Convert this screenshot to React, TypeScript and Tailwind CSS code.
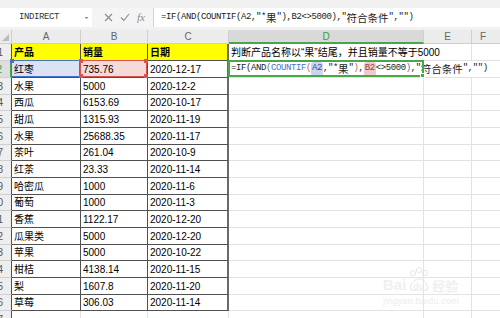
import React from "react";

const M = "font-['Liberation_Mono'] text-[9px] tracking-[-0.4px]";
const C = "font-['Noto_Sans_CJK_SC'] text-[10.5px]";

const data: [string, string, string][] = [
  ["红枣", "735.76", "2020-12-17"],
  ["水果", "5000", "2020-12-2"],
  ["西瓜", "6153.69", "2020-10-17"],
  ["甜瓜", "1315.93", "2020-11-19"],
  ["水果", "25688.35", "2020-11-17"],
  ["茶叶", "261.04", "2020-10-9"],
  ["红茶", "23.33", "2020-11-14"],
  ["哈密瓜", "1000", "2020-11-6"],
  ["葡萄", "1000", "2020-11-3"],
  ["香蕉", "1122.17", "2020-12-20"],
  ["瓜果类", "5000", "2020-12-20"],
  ["苹果", "5000", "2020-10-22"],
  ["柑桔", "4138.14", "2020-11-15"],
  ["梨", "1607.8", "2020-11-20"],
  ["草莓", "306.03", "2020-11-14"],
];

const heights = ["h-[17px]", "h-[17px]", "h-[16px]"];

const cellText = "text-[10px] text-black font-['Liberation_Sans','Noto_Sans_CJK_SC',sans-serif]";
const dark = "border-b border-r border-[#505050]";
const light = "border-b border-r border-[#e2e2e2]";

function RowHead({ n, sel }: { n: number; sel?: boolean }) {
  return (
    <div
      className={
        sel
          ? "w-[12px] shrink-0 flex items-center justify-end pr-[8px] overflow-hidden bg-[#dedede] border-b border-b-[#cfcfcf] border-r-2 border-r-[#4ba54b] text-[10px] text-[#3f9a3f] font-['Liberation_Sans']"
          : "w-[12px] shrink-0 flex items-center justify-end pr-[8px] overflow-hidden bg-[#eeeeee] border-b border-b-[#cfcfcf] border-r border-r-[#505050] text-[10px] text-[#555] font-['Liberation_Sans']"
      }
    >
      <span className="shrink-0">{n}</span>
    </div>
  );
}

function Corner({ pos, color }: { pos: string; color: string }) {
  return <div className={`absolute w-[4px] h-[4px] ${pos} ${color}`} />;
}

export default function App() {
  return (
    <div className="w-[500px] h-[318px] overflow-hidden bg-white relative select-none">
      {/* top strip */}
      <div className="h-[8px] bg-[#f1f1f1]" />
      {/* formula bar */}
      <div className="h-[19px] flex bg-[#f4f4f4]">
        <div className="w-[92px] bg-white flex items-center pl-[19px] pr-[3px]">
          <span className={`${M} text-[#333]`}>INDIRECT</span>
          <svg className="ml-auto" width="5" height="4" viewBox="0 0 5 4">
            <path d="M0.5 1 L2.5 3 L4.5 1 Z" fill="#888" />
          </svg>
        </div>
        <div className="w-[61px] flex items-center pl-[12px] gap-[7px]">
          <svg width="9" height="9" viewBox="0 0 9 9">
            <path d="M1 1 L8 8 M8 1 L1 8" stroke="#8a8a8a" strokeWidth="1.1" fill="none" />
          </svg>
          <svg width="10" height="9" viewBox="0 0 10 9">
            <path d="M1 4.5 L3.8 7.5 L9 1" stroke="#8a8a8a" strokeWidth="1.1" fill="none" />
          </svg>
          <span className="font-['Liberation_Serif'] italic text-[11px] text-[#8a8a8a] leading-none">fx</span>
        </div>
        <div className="flex-1 bg-white border-l border-[#d4d4d4] flex items-center pl-[7px] text-[#222] whitespace-nowrap">
          <span className={M}>{'=IF(AND(COUNTIF(A2,"*'}</span>
          <span className={C}>果</span>
          <span className={M}>{'"),B2<>5000),"'}</span>
          <span className={C}>符合条件</span>
          <span className={M}>{'","")'}</span>
        </div>
      </div>
      <div className="h-[3px] bg-[#f1f1f1]" />
      {/* column headers */}
      <div className="h-[14px] flex text-[10px] font-['Liberation_Sans'] text-[#666]">
        <div className="w-[12px] shrink-0 bg-[#ececec] border-b border-r border-[#cfcfcf] flex items-end justify-end pr-[2px] pb-[2px]">
          <svg width="7" height="7" viewBox="0 0 7 7">
            <path d="M7 0 L7 7 L0 7 Z" fill="#bdbdbd" />
          </svg>
        </div>
        <div className="w-[69px] shrink-0 bg-[#ececec] border-b border-r border-[#cfcfcf] flex items-center justify-center">A</div>
        <div className="w-[67px] shrink-0 bg-[#ececec] border-b border-r border-[#cfcfcf] flex items-center justify-center">B</div>
        <div className="w-[81px] shrink-0 bg-[#ececec] border-b border-r border-[#cfcfcf] flex items-center justify-center">C</div>
        <div className="w-[195px] shrink-0 bg-[#d9d9d9] border-b-2 border-b-[#4ba54b] border-r border-r-[#cfcfcf] flex items-center justify-center text-[#3f9a3f]">D</div>
        <div className="w-[48px] shrink-0 bg-[#ececec] border-b border-r border-[#cfcfcf] flex items-center justify-center">E</div>
        <div className="w-[40px] shrink-0 bg-[#ececec] border-b border-[#cfcfcf] flex items-center pl-[8px]">F</div>
      </div>
      {/* row 1 */}
      <div className={`h-[17px] flex ${cellText}`}>
        <RowHead n={1} />
        <div className={`w-[69px] shrink-0 bg-[#ffff00] ${dark} flex items-center pl-[2px] font-bold`}>产品</div>
        <div className={`w-[67px] shrink-0 bg-[#ffff00] ${dark} flex items-center pl-[2px] font-bold`}>销量</div>
        <div className={`w-[81px] shrink-0 bg-[#ffff00] border-b border-b-[#505050] border-r-2 border-r-[#6a6a6a] flex items-center pl-[2px] font-bold`}>日期</div>
        <div className="w-[195px] shrink-0 border-b border-b-[#e2e2e2] flex items-center pl-[2px] whitespace-nowrap overflow-visible">
          判断产品名称以“果”结尾，并且销量不等于5000
        </div>
        <div className={`w-[48px] shrink-0 ${light}`} />
        <div className="w-[40px] shrink-0 border-b border-[#e2e2e2]" />
      </div>
      {/* data rows */}
      {data.map((r, i) => {
        const h = heights[i % 3];
        const isFirst = i === 0;
        return (
          <div key={i} className={`${h} flex ${cellText}`}>
            <RowHead n={i + 2} sel={isFirst} />
            <div
              className={`w-[69px] shrink-0 ${dark} flex items-center pl-[2px] whitespace-nowrap relative ${
                isFirst ? "bg-[#dae2f4]" : ""
              }`}
            >
              {r[0]}
              {isFirst && (
                <div className="absolute -top-[1px] -left-[1px] right-0 bottom-0 border border-[#4472c4]">
                  <Corner pos="-top-[2px] -left-[2px]" color="bg-[#4472c4]" />
                </div>
              )}
            </div>
            <div
              className={`w-[67px] shrink-0 ${dark} flex items-center pl-[2px] whitespace-nowrap relative ${
                isFirst ? "bg-[#f6d9d9]" : ""
              }`}
            >
              {r[1]}
              {isFirst && (
                <div className="absolute -top-[1px] -left-[1px] right-0 bottom-0 border border-[#d9534f]">
                  <Corner pos="-top-[2px] -left-[2px]" color="bg-[#d9534f]" />
                  <Corner pos="-top-[2px] -right-[2px]" color="bg-[#d9534f]" />
                  <Corner pos="-bottom-[2px] -left-[2px]" color="bg-[#d9534f]" />
                  <Corner pos="-bottom-[2px] -right-[2px]" color="bg-[#d9534f]" />
                </div>
              )}
            </div>
            <div className="w-[81px] shrink-0 border-b border-b-[#505050] border-r-2 border-r-[#6a6a6a] flex items-center pl-[2px] whitespace-nowrap">
              {r[2]}
            </div>
            {isFirst ? (
              <div className="w-[195px] shrink-0 border-b border-b-[#e2e2e2] flex items-center pl-[2px] whitespace-nowrap overflow-visible relative text-[#222]">
                <span className={M}>{"=IF(AND"}</span>
                <span className={`${M} text-[#4a72c4]`}>{"(COUNTIF"}</span>
                <span className={`${M} text-[#d0604f]`}>{"("}</span>
                <span className={`${M} bg-[#c8d5f1] text-[#2f4f9a] rounded-[3px] px-[1px]`}>{"A2"}</span>
                <span className={M}>{',"*'}</span>
                <span className={C}>果</span>
                <span className={M}>{'"'}</span>
                <span className={`${M} text-[#d0604f]`}>{")"}</span>
                <span className={M}>{","}</span>
                <span className={`${M} bg-[#f1c9c9] text-[#9a3b3b] rounded-[3px] px-[1px]`}>{"B2"}</span>
                <span className={M}>{"<>5000"}</span>
                <span className={`${M} text-[#4a72c4]`}>{")"}</span>
                <span className={M}>{',"'}</span>
                <span className={C}>符合条件</span>
                <span className={M}>{'","")'}</span>
                <span className="w-px h-[12px] bg-black ml-[2px]" />
                <div className="absolute -top-[1px] -left-[1px] right-0 bottom-0 border-2 border-[#4ba54b]">
                  <div className="absolute -right-[3px] -bottom-[3px] w-[5px] h-[5px] bg-[#4ba54b] border border-white" />
                </div>
              </div>
            ) : (
              <div className={`w-[195px] shrink-0 ${light}`} />
            )}
            {isFirst ? (
              <div className="w-[48px] shrink-0 border-b border-[#e2e2e2]" />
            ) : (
              <div className={`w-[48px] shrink-0 ${light}`} />
            )}
            <div className="w-[40px] shrink-0 border-b border-[#e2e2e2]" />
          </div>
        );
      })}
      {/* row 17 partial */}
      <div className={`h-[17px] flex ${cellText}`}>
        <RowHead n={17} />
        <div className={`w-[69px] shrink-0 ${light}`} />
        <div className={`w-[67px] shrink-0 ${light}`} />
        <div className={`w-[81px] shrink-0 ${light}`} />
        <div className={`w-[195px] shrink-0 ${light}`} />
        <div className={`w-[48px] shrink-0 ${light}`} />
        <div className="w-[40px] shrink-0 border-b border-[#e2e2e2]" />
      </div>

      {/* watermark */}
      <div className="absolute left-[383px] top-[262px] w-[90px] h-[44px] pointer-events-none">
        <div className="flex items-end h-[30px]">
          <span className="font-['Liberation_Sans'] font-bold text-[15px] leading-none text-[#efefef]">Bai</span>
          <svg width="24" height="26" viewBox="0 0 24 26" className="mx-[1px]">
            <circle cx="6" cy="7" r="2.6" fill="none" stroke="#e6e6e6" strokeWidth="1" />
            <circle cx="12" cy="4" r="2.6" fill="none" stroke="#e6e6e6" strokeWidth="1" />
            <circle cx="18" cy="7" r="2.6" fill="none" stroke="#e6e6e6" strokeWidth="1" />
            <path d="M4 24 C2 18 8 13 12 13 C16 13 22 18 20 24 Z" fill="none" stroke="#e6e6e6" strokeWidth="1" />
            <text x="6" y="23" fontSize="9" fontWeight="bold" fill="#efefef" fontFamily="Liberation Sans">du</text>
          </svg>
          <span className="font-['Noto_Sans_CJK_SC'] font-bold text-[13px] leading-none text-[#efefef]">经验</span>
        </div>
        <div className="font-['Liberation_Sans'] text-[9px] text-[#ececec] mt-[3px] tracking-[0.2px]">jingyan.baidu.com</div>
      </div>
    </div>
  );
}
